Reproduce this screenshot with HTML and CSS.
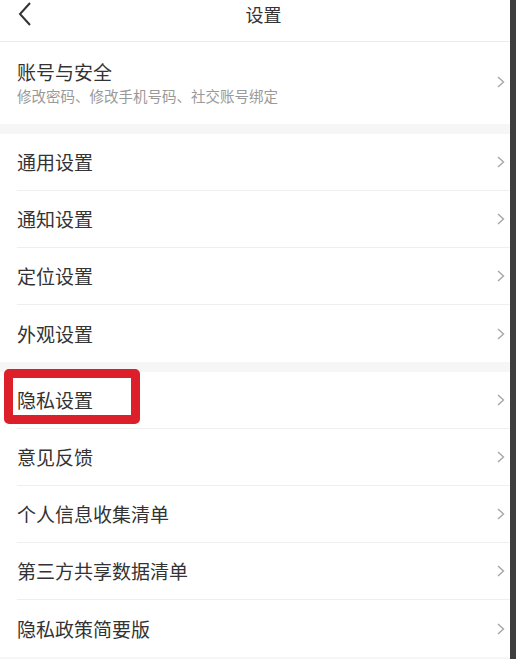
FILE: index.html
```html
<!DOCTYPE html>
<html lang="zh-CN">
<head>
  <meta charset="UTF-8">
  <meta name="viewport" content="width=device-width, initial-scale=1.0">
  <title>设置</title>
  <link rel="stylesheet" href="styles.css">
</head>
<body>

<div class="screen">
  <div class="phone">
    <header class="topbar">
      <svg class="back" width="16" height="24" viewBox="0 0 16 24">
        <path d="M13 1 L3 12 L13 23" fill="none" stroke="#333" stroke-width="2"/>
      </svg>
      <h1 class="title">设置</h1>
      <span></span>
    </header>

    <!-- Cuenta -->
    <div class="group">
      <div class="item item-account">
        <div>
          <div class="item-label">账号与安全</div>
          <div class="item-sub">修改密码、修改手机号码、社交账号绑定</div>
        </div>
        <svg class="arrow" width="8" height="12" viewBox="0 0 8 12"><path d="M1 1 L6.5 6 L1 11" fill="none" stroke="#a6a6a6" stroke-width="1.4"/></svg>
      </div>
    </div>

    <div class="group">
      <div class="item">
        <span class="item-label">通用设置</span>
        <svg class="arrow" width="8" height="12" viewBox="0 0 8 12"><path d="M1 1 L6.5 6 L1 11" fill="none" stroke="#a6a6a6" stroke-width="1.4"/></svg>
      </div>
      <div class="item">
        <span class="item-label">通知设置</span>
        <svg class="arrow" width="8" height="12" viewBox="0 0 8 12"><path d="M1 1 L6.5 6 L1 11" fill="none" stroke="#a6a6a6" stroke-width="1.4"/></svg>
      </div>
      <div class="item">
        <span class="item-label">定位设置</span>
        <svg class="arrow" width="8" height="12" viewBox="0 0 8 12"><path d="M1 1 L6.5 6 L1 11" fill="none" stroke="#a6a6a6" stroke-width="1.4"/></svg>
      </div>
      <div class="item">
        <span class="item-label">外观设置</span>
        <svg class="arrow" width="8" height="12" viewBox="0 0 8 12"><path d="M1 1 L6.5 6 L1 11" fill="none" stroke="#a6a6a6" stroke-width="1.4"/></svg>
      </div>
    </div>

    <div class="group">
      <div class="item item-marked">
        <span class="mark"></span>
        <span class="item-label">隐私设置</span>
        <svg class="arrow" width="8" height="12" viewBox="0 0 8 12"><path d="M1 1 L6.5 6 L1 11" fill="none" stroke="#a6a6a6" stroke-width="1.4"/></svg>
      </div>
      <div class="item">
        <span class="item-label">意见反馈</span>
        <svg class="arrow" width="8" height="12" viewBox="0 0 8 12"><path d="M1 1 L6.5 6 L1 11" fill="none" stroke="#a6a6a6" stroke-width="1.4"/></svg>
      </div>
      <div class="item">
        <span class="item-label">个人信息收集清单</span>
        <svg class="arrow" width="8" height="12" viewBox="0 0 8 12"><path d="M1 1 L6.5 6 L1 11" fill="none" stroke="#a6a6a6" stroke-width="1.4"/></svg>
      </div>
      <div class="item">
        <span class="item-label">第三方共享数据清单</span>
        <svg class="arrow" width="8" height="12" viewBox="0 0 8 12"><path d="M1 1 L6.5 6 L1 11" fill="none" stroke="#a6a6a6" stroke-width="1.4"/></svg>
      </div>
      <div class="item">
        <span class="item-label">隐私政策简要版</span>
        <svg class="arrow" width="8" height="12" viewBox="0 0 8 12"><path d="M1 1 L6.5 6 L1 11" fill="none" stroke="#a6a6a6" stroke-width="1.4"/></svg>
      </div>
    </div>
  </div>
  <div class="edge"></div>
</div>

</body>
</html>
```

FILE: styles.css
```css
* {
  box-sizing: border-box;
}
body {
  margin: 0;
  font-family: "Noto Sans CJK SC", "Noto Sans", sans-serif;
  background-color: #f6f6f6;
  color: #333;
}
.screen {
  display: flex;
  height: 659px;
  overflow: hidden;
}
.phone {
  flex: 1;
  background-color: #f6f6f6;
}
/* Franja oscura del borde derecho */
.edge {
  width: 6px;
  background-color: #3e3e3e;
}
.topbar {
  display: grid;
  grid-template-columns: 1fr auto 1fr;
  align-items: start;
  height: 42px;
  padding: 2px 0 0 17px;
  background: #fff;
  border-bottom: 1px solid #ececec;
}
.back {
  display: block;
}
.title {
  margin: 0;
  font-size: 18px;
  line-height: 24px;
  font-weight: normal;
  color: #333;
}
.group {
  background: #fff;
  margin-bottom: 10px;
}
.item {
  position: relative;
  display: flex;
  align-items: center;
  justify-content: space-between;
  height: 57px;
  margin-left: 17px;
  padding-right: 5px;
  border-bottom: 1px solid #efefef;
}
.item:last-child {
  border-bottom: none;
}
.item-account {
  height: 82px;
  padding-bottom: 2px;
}
.item-label {
  font-size: 19px;
  line-height: 26px;
  color: #333;
}
.item-sub {
  margin-top: 2px;
  font-size: 14.5px;
  line-height: 18px;
  color: #999;
}
.arrow {
  display: block;
}
/* Recuadro rojo que marca la opción */
.mark {
  position: absolute;
  left: -13px;
  top: -3px;
  width: 136px;
  height: 55px;
  border: 9px solid #dc1f2b;
  border-radius: 5px;
}
```
